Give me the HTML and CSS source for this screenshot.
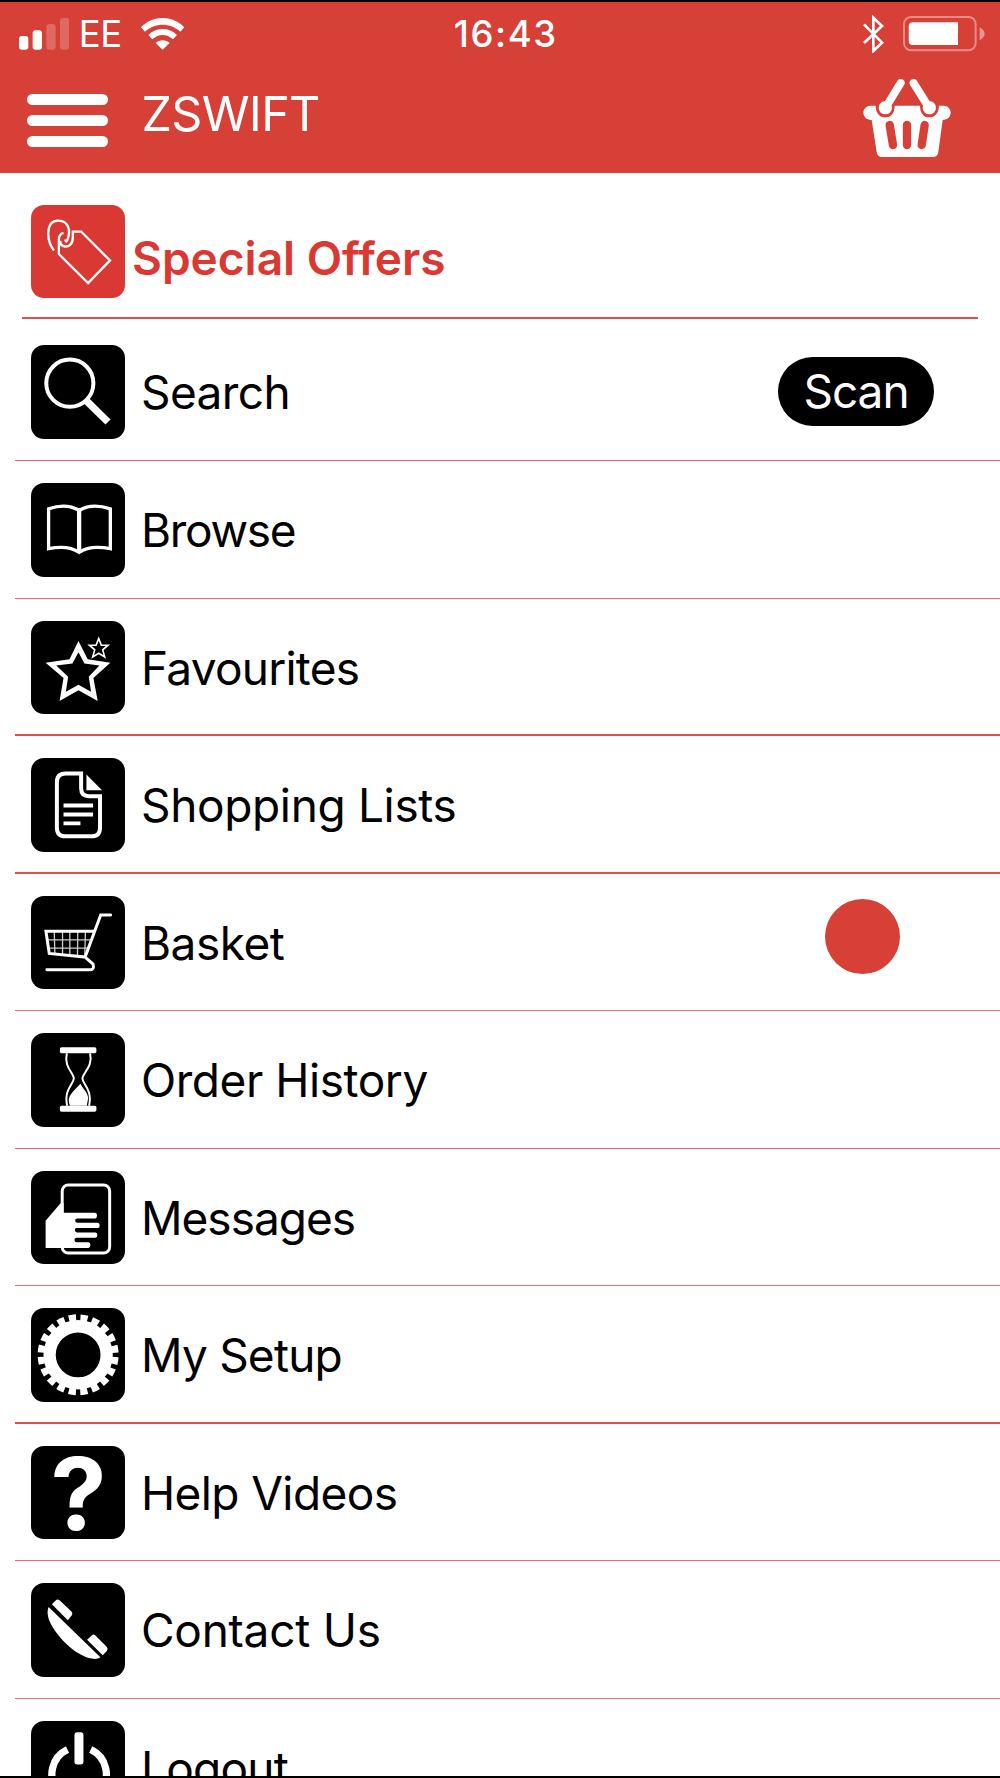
FILE: index.html
```html
<!DOCTYPE html>
<html lang="en">
<head>
  <meta charset="UTF-8">
  <title>ZSWIFT</title>
  <meta name="viewport" content="width=device-width, initial-scale=1.0">
  <link rel="stylesheet" href="styles.css">
</head>
<body>

  <header class="topbar">
    <div class="status">
      <div class="status-left">
        <svg class="signal" viewBox="0 0 151 95">
          <rect x="0" y="54" width="28" height="41" rx="9"/>
          <rect x="41" y="37" width="28" height="58" rx="9"/>
          <rect class="dim" x="82" y="18" width="28" height="77" rx="9"/>
          <rect class="dim" x="123" y="0" width="28" height="95" rx="9"/>
        </svg>
        <span class="carrier">EE</span>
        <svg class="wifi" viewBox="0 0 130 95">
          <path d="M0 28C36-9 94-9 130 28L118 41C88 13 42 13 12 41Z"/>
          <path d="M22 51C46 27 84 27 108 51L96 64C77 47 53 47 34 64Z"/>
          <path d="M44 75C56 64 74 64 86 75L65 95Z"/>
        </svg>
      </div>
      <span class="time">16:43</span>
      <div class="status-right">
        <svg class="bluetooth" viewBox="0 0 63 116">
          <path d="M3 28L57 83L31 108V8L57 33L3 84"/>
        </svg>
        <svg class="battery" viewBox="0 0 245 106">
          <rect class="shell" x="3" y="3" width="215" height="100" rx="21"/>
          <path d="M29 19H165V87H29Q17 87 17 75V31Q17 19 29 19Z"/>
          <path class="tip" d="M230 34Q245 42 245 53T230 73Z"/>
        </svg>
      </div>
    </div>
    <div class="titlebar">
      <button class="menu-btn" aria-label="Menu">
        <span></span><span></span><span></span>
      </button>
      <h1>ZSWIFT</h1>
      <svg class="basket-btn" viewBox="0 0 264 236">
        <path d="M22 80H38C38 102 50 115 67 115S95 102 95 80H171C171 102 182 115 199 115S227 102 228 80H242C271 83 270 122 239 123L226 219Q224 234 209 234H57Q43 234 41 219L26 123C-6 122-7 83 22 80Z"/>
        <circle cx="67" cy="86" r="20"/>
        <circle cx="199" cy="86" r="20"/>
        <path class="handle" d="M113 12L69 84M152 12L197 84"/>
        <path class="slot" d="M80 138L90 198M132 138V198M185 138L176 198"/>
      </svg>
    </div>
  </header>

  <main class="menu">
    <a class="row offers" href="#">
      <svg class="icon" viewBox="0 0 282 282">
        <path class="line" d="M69 137C46 108 43 47 82 47C116 47 120 82 109 107Q105 114 103 104M98 84Q84 88 84 104V148L172 235L238 167L151 80H126V98C126 120 113 126 102 125Q88 124 88 108"/>
      </svg>
      <span class="label">Special Offers</span>
    </a>

    <a class="row search" href="#">
      <svg class="icon" viewBox="0 0 282 282">
        <circle cx="117" cy="115" r="71" fill="none" stroke="#fff" stroke-width="12"/>
        <path d="M168 169L232 232" stroke="#fff" stroke-width="22"/>
      </svg>
      <span class="label">Search</span>
      <span class="scan">Scan</span>
    </a>

    <a class="row" href="#">
      <svg class="icon" viewBox="0 0 282 282">
        <path class="line" stroke-width="10" d="M145 82Q105 60 53 78V198Q112 186 145 209Q178 186 239 198V78Q185 60 145 82Z"/>
        <path d="M145 82V209" stroke="#fff" stroke-width="13"/>
      </svg>
      <span class="label browse">Browse</span>
    </a>

    <a class="row strong" href="#">
      <svg class="icon" viewBox="0 0 282 282">
        <path fill-rule="evenodd" d="M143 60L171 115L239 126L188 172L201 241L143 209L86 241L98 172L44 126L116 115ZM143 94L125 128L76 134L112 168L105 213L143 192L181 213L174 168L206 134L161 128Z"/>
        <path class="line" stroke-width="5" d="M204 53L212 73H232L216 87L222 108L204 97L186 108L192 87L176 73H196Z"/>
      </svg>
      <span class="label favourites">Favourites</span>
    </a>

    <a class="row strong" href="#">
      <svg class="icon" viewBox="0 0 282 282">
        <path class="line" stroke-width="12" d="M151 47H104Q78 47 78 73V210Q78 236 104 236H182Q208 236 208 210V115H175Q151 115 151 91Z"/>
        <path d="M167 50L214 97H167ZM98 137H187V149H98ZM98 164H187V176H98ZM98 191H149V203H98Z"/>
      </svg>
      <span class="label shopping">Shopping Lists</span>
    </a>

    <a class="row" href="#">
      <svg class="icon" viewBox="0 0 282 282">
        <path class="line" stroke-width="4" opacity=".8" d="M70 107L72 175M95 107V177M117 107V179M141 107L140 181M164 107L162 183M46 132H182M50 157H172"/>
        <path class="line" stroke-width="9" stroke-linecap="round" d="M240 57H210L163 184L55 173L45 106H188M163 184L187 205Q191 222 180 222H48"/>
      </svg>
      <span class="label basket">Basket</span>
      <span class="dot"></span>
    </a>

    <a class="row" href="#">
      <svg class="icon" viewBox="0 0 282 282">
        <rect x="87" y="43" width="110" height="18" rx="5"/>
        <rect x="87" y="219" width="110" height="18" rx="5"/>
        <path class="line" stroke-width="6" d="M108 61C98 102 129 121 129 137C129 153 98 170 109 219M178 61C188 102 155 121 155 137C155 153 186 170 175 219"/>
        <path d="M149 153C156 168 173 182 172 197L168 219H117C106 190 125 180 149 153Z"/>
      </svg>
      <span class="label history">Order History</span>
    </a>

    <a class="row" href="#">
      <svg class="icon" viewBox="0 0 282 282">
        <rect class="line" stroke-width="9" x="94" y="42" width="143" height="205" rx="18"/>
        <path d="M89 97H98V126H193Q199 126 199 134T193 143H139Q133 143 133 149T139 156H201Q207 156 207 164T201 172H138Q132 172 132 178T138 185H194Q200 185 200 193T194 201H137Q131 201 131 208T137 215H173Q179 215 179 223T173 232H44V150Z"/>
      </svg>
      <span class="label messages">Messages</span>
    </a>

    <a class="row strong" href="#">
      <svg class="icon" viewBox="0 0 282 282">
        <circle cx="142" cy="141" r="86" fill="none" stroke="#fff" stroke-width="37"/>
        <circle cx="142" cy="141" r="112" fill="none" stroke="#fff" stroke-width="20" pathLength="200" stroke-dasharray="6.2 3.8" stroke-dashoffset="-1.9"/>
      </svg>
      <span class="label setup">My Setup</span>
    </a>

    <a class="row" href="#">
      <svg class="icon" viewBox="0 0 282 282">
        <text class="mark" x="143" y="253">?</text>
      </svg>
      <span class="label help">Help Videos</span>
    </a>

    <a class="row" href="#">
      <svg class="icon" viewBox="0 0 282 282">
        <path d="M53 72C40 105 72 150 110 187C145 220 190 238 209 224Z"/>
        <path d="M75 52Q80 47 86 52L122 86Q127 91 123 97L111 112L63 64ZM183 158Q188 153 194 158L228 192Q233 198 229 204L216 218L169 171Z"/>
      </svg>
      <span class="label contact">Contact Us</span>
    </a>

    <a class="row" href="#">
      <svg class="icon" viewBox="0 0 282 282">
        <path class="line" stroke-width="22" d="M110 86A82 82 0 1 0 180 86"/>
        <rect x="131" y="34" width="27" height="97" rx="8"/>
      </svg>
      <span class="label logout">Logout</span>
    </a>
  </main>

</body>
</html>
```
FILE: styles.css
```css
:root {
  --header-red: #d64037;
  --offer-red: #da3832;
  --line-red: #e2736c;
}

* {
  margin: 0;
  padding: 0;
  box-sizing: border-box;
}

body {
  height: 1778px;
  border-top: 2px solid #000;
  border-bottom: 2px solid #000;
  background: #fff;
  color: #000;
  font-family: Inter, "Liberation Sans", sans-serif;
  overflow: hidden;
}

/* Header */
.topbar {
  height: 171px;
  background: var(--header-red);
  color: #fff;
}

.topbar svg {
  display: block;
  fill: #fff;
}

.status {
  display: grid;
  grid-template-columns: 1fr auto 1fr;
  align-items: center;
  height: 64px;
  padding: 0 15px 0 18.5px;
}

.status-left,
.status-right {
  display: flex;
  align-items: center;
}

.status-right {
  justify-content: flex-end;
  gap: 19.6px;
}

.signal {
  width: 50.3px;
  height: 31.7px;
}

.signal .dim {
  opacity: 0.22;
}

.carrier {
  margin-left: 10px;
  font-size: 36.5px;
  line-height: 44px;
  letter-spacing: -0.5px;
}

.wifi {
  width: 43.3px;
  height: 31.7px;
  margin-left: 19px;
}

.time {
  margin-left: 8px;
  font-size: 36.5px;
  font-weight: 500;
  letter-spacing: 1.6px;
}

.bluetooth {
  width: 21px;
  height: 38.7px;
}

.bluetooth path {
  fill: none;
  stroke: #fff;
  stroke-width: 8;
}

.battery {
  width: 81.7px;
  height: 35.3px;
}

.battery .shell {
  fill: none;
  stroke: #fff;
  stroke-width: 6;
  opacity: 0.4;
}

.battery .tip {
  opacity: 0.45;
}

.titlebar {
  display: flex;
  align-items: flex-start;
  padding: 11px 49px 0 26.5px;
}

.menu-btn {
  display: flex;
  flex-direction: column;
  gap: 10px;
  width: 81.5px;
  padding-top: 17px;
  border: none;
  background: none;
}

.menu-btn span {
  width: 100%;
  height: 11px;
  border-radius: 6px;
  background: #fff;
}

.titlebar h1 {
  margin: 8px 0 0 33.5px;
  font-size: 48.5px;
  font-weight: 400;
  line-height: 58px;
  letter-spacing: -0.7px;
}

.basket-btn {
  width: 88px;
  height: 78.7px;
  margin-left: auto;
  margin-top: 2px;
}

.basket-btn .handle {
  fill: none;
  stroke: #fff;
  stroke-width: 24;
  stroke-linecap: round;
}

.basket-btn .slot {
  fill: none;
  stroke: var(--header-red);
  stroke-width: 25;
  stroke-linecap: round;
}

/* Menu rows */
.row {
  display: flex;
  align-items: flex-start;
  height: 137.5px;
  margin-left: 15.3px;
  padding: 22px 66px 0 16.1px;
  border-bottom: 1px solid var(--line-red);
  color: inherit;
  text-decoration: none;
}

.row.strong {
  border-bottom: 2px solid #dc514a;
}

.row.offers {
  height: 146px;
  margin: 0 22px;
  padding: 31.5px 0 0 9.4px;
  border-bottom: 2px solid #dc514a;
}

.row.search {
  height: 142px;
  padding-top: 26.3px;
}

.icon {
  flex: none;
  width: 93.6px;
  height: 93.6px;
  border-radius: 13px;
  background: #000;
  fill: #fff;
}

.icon .line {
  fill: none;
  stroke: #fff;
}

.icon .mark {
  font-family: Inter, sans-serif;
  font-size: 302px;
  font-weight: 700;
  text-anchor: middle;
}

.label {
  margin-left: 16px;
  font-size: 46px;
  line-height: 94px;
  letter-spacing: -0.6px;
  white-space: nowrap;
}

.browse { letter-spacing: -1.3px; }
.favourites { letter-spacing: -0.75px; }
.shopping { letter-spacing: -0.35px; }
.basket { letter-spacing: -0.5px; }
.history { letter-spacing: -0.45px; }
.messages { letter-spacing: -1px; }
.setup { letter-spacing: -0.8px; }
.contact { letter-spacing: -0.25px; }
.logout { letter-spacing: -0.75px; }

.offers .icon {
  background: var(--offer-red);
}

.offers .icon .line {
  stroke-width: 7;
}

.offers .label {
  margin: 6px 0 0 7px;
  color: var(--offer-red);
  font-weight: 600;
  letter-spacing: 0;
  font-variant-ligatures: none;
}

.scan {
  width: 156px;
  height: 69px;
  margin: 12.2px 0 0 auto;
  border-radius: 35px;
  background: #000;
  color: #fff;
  font-size: 46px;
  line-height: 69px;
  letter-spacing: -1px;
  text-align: center;
}

.dot {
  width: 75px;
  height: 75px;
  margin: 3px 34px 0 auto;
  border-radius: 50%;
  background: var(--header-red);
}
```
